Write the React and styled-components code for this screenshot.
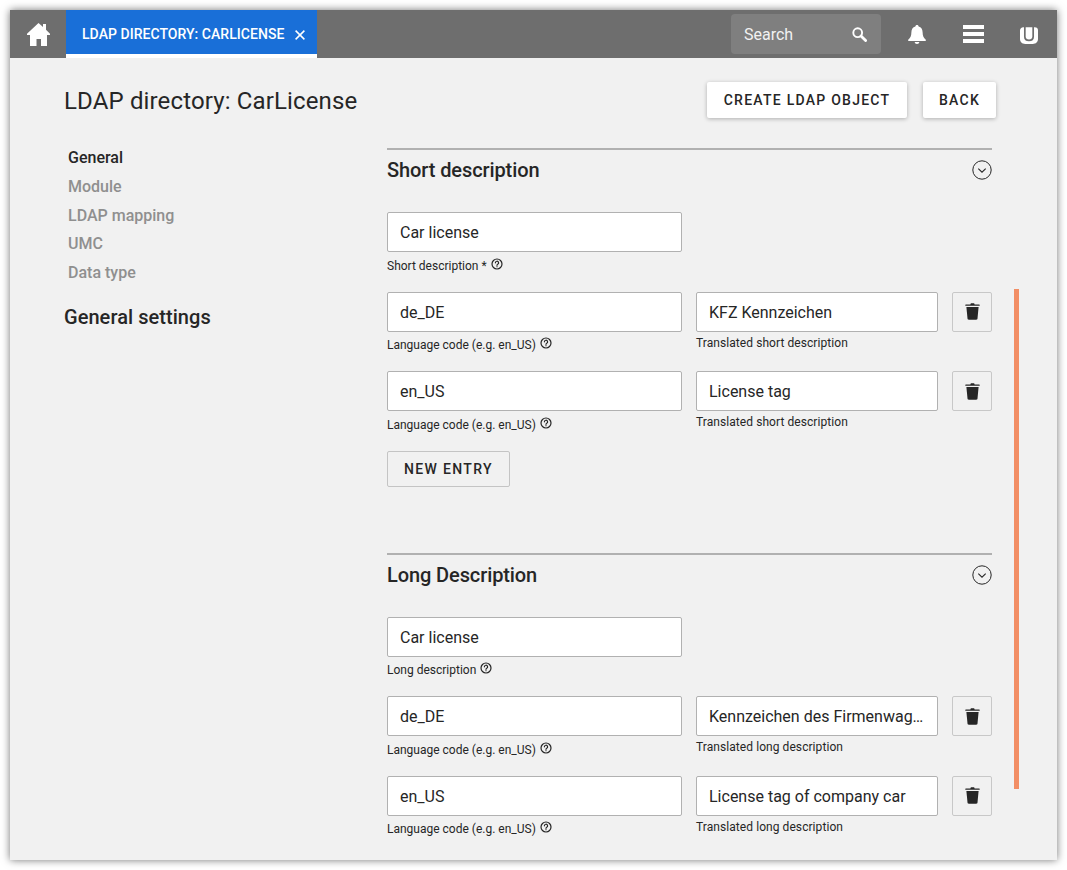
import React from "react";
import styled, { createGlobalStyle } from "styled-components";

const Global = createGlobalStyle`
  html, body { margin: 0; padding: 0; background: #fff; }
  body { font-family: Roboto, "Liberation Sans", sans-serif; color: #262626; }
  * { box-sizing: border-box; }
`;

const Stage = styled.div`
  width: 1067px; height: 870px; padding: 10px; overflow: hidden;
`;
const Win = styled.div`
  position: relative; width: 1047px; height: 850px; background: #f1f1f1; overflow: hidden;
  box-shadow: 0 0 8px rgba(0,0,0,.55);
`;
const Header = styled.header`
  display: flex; align-items: stretch; height: 48px; background: #6e6e6e; color: #fff;
`;
const HomeBtn = styled.div`
  width: 56px; display: flex; align-items: center; justify-content: center;
`;
const Tab = styled.div`
  width: 251px; display: flex; align-items: center; gap: 11px; padding: 4px 10px 0 16px;
  background: #196fd8; border-bottom: 4px solid #fff; font-size: 14px; font-weight: 500; white-space: nowrap;
  height: 48px; letter-spacing: .04px;
`;
const TabClose = styled.svg`
  width: 10px; height: 10px; margin-top: 1px;
`;
const HeaderRight = styled.div`
  margin-left: auto; display: flex; align-items: center; padding-right: 19px;
`;
const SearchBox = styled.div`
  width: 150px; height: 40px; border-radius: 4px; background: #7f7f7f; display: flex; align-items: center;
  justify-content: space-between; padding: 0 14px 0 13px; font-size: 16px; color: #f2f2f2; margin-right: 27px;
`;
const HeaderIcon = styled.svg`
  display: block; margin-right: ${p => p.$mr}px; margin-top: ${p => p.$mt || 0}px;
`;
const Content = styled.div`
  display: grid; grid-template-columns: 377px 605px 65px; padding: 24.1px 0 0 0;
`;
const TopBar = styled.div`
  grid-column: 1 / -1; display: flex; align-items: center; justify-content: space-between;
  padding: 0 61px 0 54px; height: 36px; margin-bottom: 26px;
`;
const Title = styled.h1`
  margin: 2px 0 0; font-size: 24px; font-weight: 400; letter-spacing: .14px;
`;
const Actions = styled.div`display: flex; gap: 16px;`;
const RaisedButton = styled.button`
  height: 36px; width: ${p => p.$w}px; padding: 0; background: #fff; border: 0; border-radius: 2px; font: 500 14px Roboto, sans-serif;
  letter-spacing: 1.25px; color: #262626; box-shadow: 0 1px 4px rgba(0,0,0,.28);
`;
const Side = styled.aside`
  padding-left: 54px;
`;
const NavList = styled.nav`
  display: flex; flex-direction: column; padding: 0 0 0 4px;
`;
const NavItem = styled.div`
  height: 28.75px; line-height: 28.75px; font-size: 16px; font-weight: 500; color: ${p => p.$active ? "#262626" : "#8f8f8f"};
`;
const SideHeading = styled.h2`
  margin: 15px 0 0; font-size: 20px; font-weight: 500; line-height: 28px; letter-spacing: .05px;
`;
const Main = styled.main`display: flex; flex-direction: column; padding-top: 4px;`;
const Section = styled.section`
  border-top: 2px solid #b1b1b1; height: 404.5px;
`;
const SectionHead = styled.div`
  height: 40px; display: flex; align-items: center; justify-content: space-between; margin-bottom: 22px;
`;
const SectionTitle = styled.h2`
  margin: 0; font-size: 20px; font-weight: 500; line-height: 40px; letter-spacing: -.1px;
`;
const Row = styled.div`
  display: flex; gap: 14px; height: 79.5px;
`;
const Field = styled.div`
  width: ${p => p.$w}px; display: flex; flex-direction: column;
`;
const TextBox = styled.div`
  height: 40px; flex: none; padding: 0 12px; background: #fff; border: 1px solid #b1b1b1; border-radius: 2px;
  font-size: 16px; line-height: 39.5px; white-space: nowrap; overflow: hidden; text-overflow: ellipsis;
`;
const HelpLabel = styled.div`
  display: flex; align-items: flex-start; gap: 4px; font-size: 12px; line-height: 14px; margin-top: 6.5px; white-space: nowrap;
`;
const PlainLabel = styled.div`
  font-size: 12px; line-height: 14px; margin-top: 4px; white-space: nowrap; letter-spacing: .07px;
`;
const Help = styled.svg`
  width: 12px; height: 12px; margin-top: -1px; flex: none;
`;
const TrashBtn = styled.div`
  width: 40px; height: 40px; border: 1px solid #c8c8c8; border-radius: 2px; display: flex; align-items: center; justify-content: center;
`;
const FlatButton = styled.button`
  height: 36px; width: 123px; padding: 0; background: #f1f1f1; border: 1px solid #c4c4c4; border-radius: 2px;
  font: 500 14px Roboto, sans-serif; letter-spacing: 1.35px; color: #262626;
`;
const Thumb = styled.div`
  position: absolute; left: 1004px; top: 279px; width: 5px; height: 500px; background: #f28e65;
`;

const HelpIcon = () => (
  <Help viewBox="0 0 24 24" fill="none" stroke="#262626" strokeWidth="2.4">
    <circle cx="12" cy="12" r="10" />
    <path d="M8.8 9.6a3.2 3.2 0 1 1 4.6 2.9c-1 .5-1.4 1.1-1.4 2.2" strokeLinecap="round" />
    <circle cx="12" cy="17.6" r=".7" fill="#262626" strokeWidth="1" />
  </Help>
);

const Chevron = () => (
  <svg width="20" height="20" viewBox="0 0 20 20" fill="none" stroke="#262626" strokeWidth="1">
    <circle cx="10" cy="10" r="9.2" />
    <path d="M6.3 8.7 10 12.2l3.7-3.5" strokeWidth="1.1" />
  </svg>
);

const Trash = () => (
  <svg width="15" height="17" viewBox="0 0 15 17" fill="#262626">
    <path d="M5.4 1.400C5.400.6 6 .2 6.600.2h1.800c.7 0 1.200.4 1.200 1.200h4.600c.3 0 .5.2.5.5v.9H.3v-.9c0-.3.2-.5.5-.5z" />
    <path d="M1.400 4h12.200l-1.100 11.600c-.1.8-.6 1.200-1.300 1.200H3.800c-.7 0-1.200-.4-1.300-1.200z" />
  </svg>
);

const Entry = ({ code, value, label }) => (
  <Row>
    <Field $w={295}>
      <TextBox>{code}</TextBox>
      <HelpLabel>Language code (e.g. en_US) <HelpIcon /></HelpLabel>
    </Field>
    <Field $w={242}>
      <TextBox>{value}</TextBox>
      <PlainLabel>{label}</PlainLabel>
    </Field>
    <TrashBtn><Trash /></TrashBtn>
  </Row>
);

export default function App() {
  return (
    <Stage>
      <Global />
      <Win>
        <Header>
          <HomeBtn>
            <svg width="23" height="23" viewBox="0 0 23 23" fill="#fff">
              <path d="M11.500 0 16 4V1h3v5.700L23 10.800V12h-3v11h-6v-7H9.500v7H3V12H0v-1.200z" />
            </svg>
          </HomeBtn>
          <Tab>
            LDAP DIRECTORY: CARLICENSE
            <TabClose viewBox="0 0 10 10" stroke="#fff" strokeWidth="1.500"><path d="M.6.6l8.800 8.800M9.400.6.600 9.400" /></TabClose>
          </Tab>
          <HeaderRight>
            <SearchBox>
              Search
              <svg width="15" height="15" viewBox="0 0 15 15" fill="none" stroke="#fff">
                <circle cx="5.700" cy="5.700" r="4.400" strokeWidth="1.900" />
                <path d="M9 9l4.600 4.600" strokeWidth="2.800" strokeLinecap="round" />
              </svg>
            </SearchBox>
            <HeaderIcon $mr={37} width="18" height="19" viewBox="0 0 18 19" fill="#fff">
              <path d="M9 0c1 0 1.600.7 1.600 1.600 2.800.7 3.900 2.800 4 5.600.1 3.600 1 5.600 3.200 7.600.3.400.1 1.200-.6 1.200H.8c-.7 0-.9-.8-.6-1.200 2.200-2 3.100-4 3.200-7.600.1-2.800 1.200-4.900 4-5.600C7.400.7 8 0 9 0z" />
              <path d="M6.700 17h4.600c0 1.200-1 2-2.300 2s-2.300-.8-2.300-2z" />
            </HeaderIcon>
            <HeaderIcon $mr={36} width="21" height="18" viewBox="0 0 21 18" fill="#fff">
              <rect y="0" width="21" height="4" />
              <rect y="7" width="21" height="4" />
              <rect y="14" width="21" height="4" />
            </HeaderIcon>
            <HeaderIcon $mr={0} $mt={2} width="18" height="17" viewBox="0 0 19 19" preserveAspectRatio="none" fill="#fff">
              <path fillRule="evenodd" d="M3.500.3h.7v10.500c0 3.300 1.900 5.200 5.300 5.200s5.300-1.900 5.300-5.200V.3h.7C17.800.3 19 1.500 19 3.500v10c0 3.300-2.200 5.500-5.500 5.500h-8C2.200 19 0 16.800 0 13.500V4C0 2 1.500.3 3.500.3z" />
              <path d="M6 .3h7v10.300c0 2.100-1.300 3.400-3.500 3.400S6 12.700 6 10.600z" />
            </HeaderIcon>
          </HeaderRight>
        </Header>
        <Content>
          <TopBar>
            <Title>LDAP directory: CarLicense</Title>
            <Actions>
              <RaisedButton $w={200}>CREATE LDAP OBJECT</RaisedButton>
              <RaisedButton $w={73}>BACK</RaisedButton>
            </Actions>
          </TopBar>
          <Side>
            <NavList>
              <NavItem $active>General</NavItem>
              <NavItem>Module</NavItem>
              <NavItem>LDAP mapping</NavItem>
              <NavItem>UMC</NavItem>
              <NavItem>Data type</NavItem>
            </NavList>
            <SideHeading>General settings</SideHeading>
          </Side>
          <Main>
            <Section>
              <SectionHead><SectionTitle>Short description</SectionTitle><Chevron /></SectionHead>
              <Row>
                <Field $w={295}>
                  <TextBox>Car license</TextBox>
                  <HelpLabel>Short description * <HelpIcon /></HelpLabel>
                </Field>
              </Row>
              <Entry code="de_DE" value="KFZ Kennzeichen" label="Translated short description" />
              <Entry code="en_US" value="License tag" label="Translated short description" />
              <FlatButton>NEW ENTRY</FlatButton>
            </Section>
            <Section>
              <SectionHead><SectionTitle>Long Description</SectionTitle><Chevron /></SectionHead>
              <Row>
                <Field $w={295}>
                  <TextBox>Car license</TextBox>
                  <HelpLabel>Long description <HelpIcon /></HelpLabel>
                </Field>
              </Row>
              <Entry code="de_DE" value="Kennzeichen des Firmenwagens" label="Translated long description" />
              <Entry code="en_US" value="License tag of company car" label="Translated long description" />
            </Section>
          </Main>
        </Content>
        <Thumb />
      </Win>
    </Stage>
  );
}
